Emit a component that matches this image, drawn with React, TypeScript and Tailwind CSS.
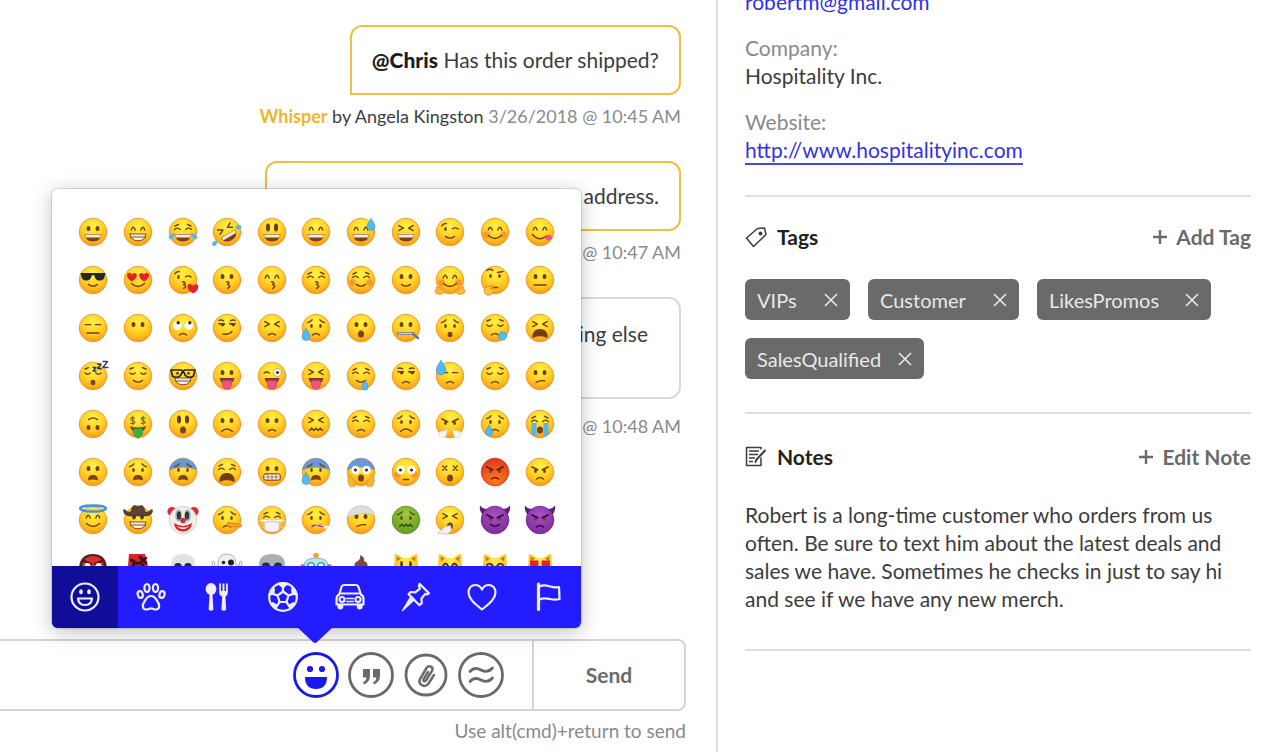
import React from 'react';
import { clsx } from 'clsx';

const INK = '#6f4110';

// Faces are drawn on a 32x32 box, centred on 16,16
const eyes: Record<string, React.ReactNode> = {
  dots: (
    <g fill={INK}>
      <ellipse cx="11.5" cy="12.5" rx="1.3" ry="1.9" />
      <ellipse cx="20.5" cy="12.5" rx="1.3" ry="1.9" />
    </g>
  ),
  tall: (
    <g fill={INK}>
      <ellipse cx="12" cy="11.5" rx="1.4" ry="3.4" />
      <ellipse cx="20" cy="11.5" rx="1.4" ry="3.4" />
    </g>
  ),
  happy: <path d="M9.2 14q2-5.4 4 0M18.8 14q2-5.4 4 0" />,
  closed: <path d="M8 13q2.6 2.4 5.2 0M18.8 13q2.6 2.4 5.2 0M8 9l3.5-1.4M24 9l-3.5-1.4" />,
  arched: <path d="M7.6 13.6q2.8-3 5.6 0M18.8 13.6q2.8-3 5.6 0M8 10l3.5-1.6M24 10l-3.5-1.6" />,
  flat: <path d="M8.3 12.6h5.4M18.3 12.6h5.4" />,
  squint: <path d="M8.8 9.6l4.6 2.6-4.6 2.4M23.2 9.6l-4.6 2.6 4.6 2.4" />,
  wink: (
    <>
      <ellipse cx="11.5" cy="13" rx="1.3" ry="1.9" fill={INK} stroke="none" />
      <path d="M7.8 9.8q2-2.6 4.6-2.2M18.5 12.8q2.6-2 5.6.2" />
    </>
  ),
  cross: <path d="M8.8 10l4 4.2M12.8 10l-4 4.2M19.2 10l4 4.2M23.2 10l-4 4.2" />,
  side: (
    <>
      <path d="M7.8 11.8h5.8M18.4 11.8h5.8M8 8.4q2.4-1 4.6.4M24 8.4q-2.4-1-4.6.4" />
      <path d="M10 12.4q1.8 2.6 3 0zM20.6 12.4q1.8 2.6 3 0z" fill={INK} />
    </>
  ),
  wide: (
    <g stroke="none">
      <circle cx="10.5" cy="14" r="4.2" fill="#fff" />
      <circle cx="21.5" cy="14" r="4.2" fill="#fff" />
      <circle cx="10.5" cy="14" r="1.6" fill="#4a2c10" />
      <circle cx="21.5" cy="14" r="1.6" fill="#4a2c10" />
    </g>
  ),
  roll: (
    <g stroke="none">
      <circle cx="10.2" cy="13.5" r="4.4" fill="#fff" />
      <circle cx="21.8" cy="13.5" r="4.4" fill="#fff" />
      <circle cx="11.2" cy="10.8" r="1.7" fill="#4a2c10" />
      <circle cx="22.8" cy="10.8" r="1.7" fill="#4a2c10" />
    </g>
  ),
  crazy: (
    <>
      <path d="M8 13q2.6-2.2 5.2 0" />
      <circle cx="21.5" cy="12.5" r="4" fill="#fff" stroke="#9b7a4a" strokeWidth="0.6" />
      <circle cx="21.5" cy="12.5" r="1.6" fill="#4a2c10" stroke="none" />
    </>
  ),
  shades: (
    <path
      d="M3.4 9h25.2l-.8 2.6c-.4 3.6-2 5-5 5-3.4 0-4.6-1.6-5.4-5l-1.4-.6-1.4.6c-.8 3.4-2 5-5.4 5-3 0-4.6-1.4-5-5z"
      fill="#252525"
      stroke="none"
    />
  ),
  hearts: (
    <path
      d="M9.8 17.6C3.6 13.8 4.2 9 7.2 8.8c1.6 0 2.4 1 2.8 2 .6-1 1.6-1.9 3-1.7 3 .5 2.6 5.3-3.2 8.5zM22.2 17.6c6.2-3.8 5.6-8.6 2.6-8.8-1.6 0-2.4 1-2.8 2-.6-1-1.6-1.9-3-1.7-3 .5-2.6 5.3 3.2 8.5z"
      fill="#e8202c"
      stroke="none"
    />
  ),
  money: (
    <path
      d="M12.8 10.2q-3.8-1.6-4 .8c0 2 4.2 1 4 3.2-.2 2-3 1.6-4.2.8M10.8 8.4v8.2M23.2 10.2q-3.800-1.600-4 .8c0 2 4.200 1 4 3.200-.2 2-3 1.600-4.200.8M21.200 8.400v8.200"
      stroke="#7c6a1e"
      strokeWidth="1.1"
    />
  ),
  nerd: (
    <>
      <path d="M4 10h10.5l1.5 1.4 1.5-1.4H28l-1.5 6q-4.5 3-8.2-.6l-1.3-3h-2l-1.300 3q-3.700 3.600-8.200.6z" fill="none" stroke="#2e2417" strokeWidth="1.7" />
      <circle cx="10.5" cy="13.2" r="1.5" fill={INK} stroke="none" />
      <circle cx="21.5" cy="13.2" r="1.5" fill={INK} stroke="none" />
    </>
  ),
  worried: (
    <>
      <ellipse cx="11.5" cy="14" rx="1.3" ry="1.9" fill={INK} stroke="none" />
      <ellipse cx="20.5" cy="14" rx="1.3" ry="1.9" fill={INK} stroke="none" />
      <path d="M7.5 10.6q3-.6 4.6-2.8M24.5 10.6q-3-.6-4.6-2.8" />
    </>
  ),
  raised: (
    <>
      <ellipse cx="11.5" cy="12" rx="1.3" ry="1.9" fill={INK} stroke="none" />
      <ellipse cx="20.5" cy="12" rx="1.3" ry="1.9" fill={INK} stroke="none" />
      <path d="M8 6.500q3-2.500 6 0M18.500 8.500l5.500-1" />
    </>
  ),
  mad: (
    <>
      <ellipse cx="11.5" cy="15" rx="1.4" ry="1.9" fill={INK} stroke="none" />
      <ellipse cx="20.5" cy="15" rx="1.4" ry="1.9" fill={INK} stroke="none" />
      <path d="M8 11l5.6 2.8M24 11l-5.6 2.8" strokeWidth="1.8" />
    </>
  ),
};

const mouths: Record<string, React.ReactNode> = {
  none: null,
  grin: (
    <>
      <path d="M7.5 18h17q-1 7.4-8.500 7.400T7.500 18z" fill="#7a4217" stroke="none" />
      <path d="M8 18.4h16l-.8 3H8.8z" fill="#f5ead6" stroke="none" />
    </>
  ),
  teeth: <path d="M8 18h16q-.6 6.8-8 6.8T8 18zM8.500 21h15" fill="#f4eee4" strokeWidth="0.9" />,
  smile: <path d="M9.5 19.4q6.5 6 13 0" />,
  slight: <path d="M11.5 20.4q4.5 3.4 9 0" />,
  tiny: <path d="M13.5 23.500h5" />,
  flat: <path d="M10 21h12" />,
  smirk: <path d="M12 22q6 1.2 9-2.6" />,
  frown: <path d="M10.5 23.4q5.5-5 11 0" />,
  smallFrown: <path d="M12.500 23q3.500-3 7 0" />,
  confused: <path d="M12 22.4q4-2.4 8.5-1.6" />,
  small: <ellipse cx="16" cy="22.5" rx="2.4" ry="2.8" fill="#7a4217" stroke="none" />,
  open: <ellipse cx="16" cy="22" rx="3" ry="3.6" fill="#7a4217" stroke="none" />,
  gape: <path d="M11 24.4q0-5.4 5-5.4t5 5.4q-5-2-10 0z" fill="#7a4217" stroke="none" />,
  wail: <path d="M9 25q.4-7.4 7-7.4T23 25q-7-3-14 0z" fill="#6f3d18" />,
  kiss: <path d="M15.5 17.8q4.600.6 1 2.800 4.600 1 .2 3.800" />,
  tongue: (
    <>
      <path d="M8.5 18h15q-1 6-7.5 6t-7.500-6z" fill="#7a4217" stroke="none" />
      <path d="M11.5 20.5h9V25q-.6 4-4.500 4t-4.500-4z" fill="#f0508c" stroke="#c9306c" strokeWidth="0.6" />
    </>
  ),
  yum: (
    <>
      <path d="M8.5 18.5q6.5 7.5 14 1.5" />
      <path d="M20.5 21.5l4.5-3q3.600 1 2.600 4-2 3-5 1.400z" fill="#ee4f86" stroke="none" />
    </>
  ),
  zip: (
    <>
      <path d="M8 21.5h15" stroke="#8b8b8b" strokeWidth="3" />
      <path d="M9 21.5h14" stroke="#e4e4e4" strokeWidth="1" strokeDasharray="1 1" />
      <path d="M23 22l5 4" stroke="#777" strokeWidth="2.6" />
    </>
  ),
  wave: <path d="M9.5 22.5l2.200-2.400 2.200 2.400 2.100-2.400 2.100 2.400 2.200-2.400 2.200 2.400" />,
  grimace: (
    <>
      <rect x="7.5" y="17.8" width="17" height="6.4" rx="2.6" fill="#f7f3ea" strokeWidth="1" />
      <path d="M8 21h16M12 18v6M16 18v6M20 18v6" strokeWidth="0.6" />
    </>
  ),
  cash: (
    <>
      <path d="M8 18q8 3 16 0-1 6-8 6t-8-6z" fill="#7a4217" stroke="none" />
      <path d="M11.5 20.5h9v6L16 30.500l-4.500-4z" fill="#3fae38" stroke="#2c8a2a" strokeWidth="0.6" />
    </>
  ),
};

const drop = (x: number, y: number, s = 1) => (
  <path
    transform={`translate(${x} ${y}) scale(${s})`}
    d="M0-5.5Q4 0 4 2.5a4 4 0 0 1-8 0Q-4 0 0-5.5z"
    fill="#54b9ee"
    stroke="#2b90cc"
    strokeWidth="0.5"
  />
);

const extras: Record<string, React.ReactNode> = {
  tears: (
    <g fill="#52b9ec">
      <path d="M8 17q-1 6-4.400 6.400Q.6 22.600 2.400 19.600 4.400 17.400 8 17zM24 17q1 6 4.400 6.400 3-.8 1.200-3.800Q27.600 17.400 24 17z" />
    </g>
  ),
  roflTears: (
    <g fill="#52b9ec">
      <path d="M6.500 24q-.6 6-3.500 6-3-.6-1.500-3.400Q3.500 24.600 6.500 24zM24.500 12q1-4 5.500-2.500 1.500 3-1.500 4-2.500 0-4-1.500z" />
    </g>
  ),
  dropTopRight: drop(26, 8),
  dropTopLeft: drop(7, 7, 1.2),
  dropLeft: drop(6, 22),
  tearLeft: drop(10, 22, 0.9),
  snot: <circle cx="23.5" cy="24" r="4.2" fill="#58bbee" stroke="#2b90cc" strokeWidth="0.6" />,
  drool: drop(20, 25, 0.8),
  heart: <path d="M26 29.500c-7.400-4-6.400-9.400-3-9.400 1.600 0 2.600 1 3 2.200.6-1.300 1.700-2.200 3.200-2 3.200.6 3.400 6-3.200 9.200z" fill="#e3202c" />,
  blush: (
    <g fill="#f2693a" opacity="0.5">
      <circle cx="7.5" cy="18.5" r="3.2" />
      <circle cx="24.5" cy="18.5" r="3.2" />
    </g>
  ),
  hands: (
    <path
      d="M2 29.500q-2.500-4 .5-4l-.5-3 3 2 2-2 .5 3.500 3-1q0 5-4 5.500zM30 29.500q2.500-4-.5-4l.5-3-3 2-2-2-.5 3.500-3-1q0 5 4 5.500z"
      fill="#f9b93a"
      stroke="#d98a1c"
      strokeWidth="0.6"
    />
  ),
  thinkHand: <path d="M6 29.500q-2.600-5 1-6.500l8-1.600q1 1.800-1 2.200l-3 .6q4 .2 3.400 3.400-.4 3.600-5.400 3.600z" fill="#fbc23c" stroke="#d98a1c" strokeWidth="0.8" />,
  zzz: <path d="M16 7.500h3l-3 3.500h3M20.500 4H24l-3.500 4.500H24M26 1.500h4.500l-4.500 6h5" stroke="#28368f" strokeWidth="1.3" />,
  steam: (
    <g fill="#f4f4f8" stroke="#cfcfd8" strokeWidth="0.5">
      <path d="M13 20.500q-1 3-5 2.500-4 1-3.500 4.500 2 3 5 2 4-1 3.500-9zM19 20.500q1 3 5 2.500 4 1 3.500 4.500-2 3-5 2-4-1-3.500-9z" />
    </g>
  ),
  streams: <path d="M7.500 15h5v13.500q-3 0-5-2.500zM19.500 15h5v11q-2 2.500-5 2.500z" fill="#58b6ea" />,
  coldTop: <path d="M2 14a14.200 14.200 0 0 1 28 0q-14-5-28 0z" fill="#5b8fe6" opacity="0.9" />,
  screamHands: <path d="M5 30.500q-4-6-1-11 3 0 3.500 4l3 2-1 5zM27 30.500q4-6 1-11-3 0-3.500 4l-3 2 1 5z" fill="#f9b331" stroke="#d98a1c" strokeWidth="0.6" />,
  halo: <ellipse cx="16" cy="4.5" rx="12.8" ry="3" stroke="#4a8fe0" strokeWidth="2.4" />,
  hat: <path d="M1.500 6q1-1.500 3.500 1.500Q8 8.500 9 7.500 10 1 13 1.500q3 1.400 6 0 3-.5 4 6 1 1 4 0 2.500-3 3.500-1.500.5 5-6 6h-17q-6.500-1-6-6z" fill="#5b4034" stroke="#3f2c24" strokeWidth="0.5" />,
  nose: <path d="M17 18.500l13 2q1.500 1.500-.5 2.500L17 22.500z" fill="#f6a623" stroke="#c97a1a" strokeWidth="0.8" />,
  mask: <path d="M2 16l7 2.500q7-3 14 0l7-2.500M2.500 22L9 24M29.500 22L23 24M9 18.500q7-2.500 14 0V26q-7 4-14 0z" fill="#f4f4f6" stroke="#cdcdd4" strokeWidth="0.9" />,
  thermometer: (
    <>
      <path d="M17 21.500l11 2" stroke="#efefef" strokeWidth="2.8" />
      <path d="M17 21.500l6 1.200" stroke="#dd2c44" strokeWidth="1.4" />
    </>
  ),
  bandage: <path d="M2 13.500Q5 2 16 1.700T30 12Q22 6 2 13.500z" fill="#dedee0" stroke="#b8b8bc" strokeWidth="0.6" />,
  tissue: <path d="M3.500 29l8-6.500 5-1 1 5-4 3.500z" fill="#f2f2f4" stroke="#bdbdc4" strokeWidth="0.7" />,
};

type Face = {
  name: string;
  eyes: string;
  mouth: string;
  extra?: string;
  under?: string;
  skin?: string;
  rotate?: number;
};

const f = (name: string, e: string, m: string, extra?: string, more: Partial<Face> = {}): Face => ({
  name,
  eyes: e,
  mouth: m,
  extra,
  ...more,
});

const faces: Face[] = [
  f('grinning', 'dots', 'grin'),
  f('beaming', 'happy', 'teeth'),
  f('tears of joy', 'arched', 'grin', 'tears'),
  f('rolling on the floor', 'squint', 'grin', 'roflTears', { rotate: -30 }),
  f('big eyes', 'tall', 'grin'),
  f('smiling eyes', 'happy', 'grin'),
  f('sweat smile', 'happy', 'grin', 'dropTopRight'),
  f('laughing', 'squint', 'grin'),
  f('winking', 'wink', 'slight'),
  f('blushing', 'happy', 'smile', undefined, { under: 'blush' }),
  f('yum', 'happy', 'yum'),

  f('sunglasses', 'shades', 'slight'),
  f('heart eyes', 'hearts', 'smile'),
  f('blowing a kiss', 'wink', 'kiss', 'heart'),
  f('kissing', 'dots', 'kiss'),
  f('kissing happily', 'happy', 'kiss'),
  f('kissing, eyes closed', 'arched', 'kiss'),
  f('relaxed', 'arched', 'slight', undefined, { under: 'blush' }),
  f('slight smile', 'dots', 'slight'),
  f('hugging', 'happy', 'smile', 'hands', { under: 'blush' }),
  f('thinking', 'raised', 'tiny', 'thinkHand'),
  f('neutral', 'dots', 'flat'),

  f('expressionless', 'flat', 'flat'),
  f('no mouth', 'dots', 'none'),
  f('rolling eyes', 'roll', 'smallFrown'),
  f('smirking', 'side', 'smirk'),
  f('persevering', 'squint', 'smallFrown'),
  f('relieved and sad', 'worried', 'smallFrown', 'dropLeft'),
  f('open mouth', 'dots', 'open'),
  f('zipped', 'dots', 'zip'),
  f('hushed', 'worried', 'small'),
  f('sleepy', 'closed', 'smallFrown', 'snot'),
  f('tired', 'squint', 'wail'),

  f('sleeping', 'closed', 'small', 'zzz'),
  f('relieved', 'closed', 'slight'),
  f('nerd', 'nerd', 'teeth'),
  f('tongue out', 'dots', 'tongue'),
  f('tongue and wink', 'crazy', 'tongue'),
  f('tongue and squint', 'squint', 'tongue'),
  f('drooling', 'arched', 'slight', 'drool'),
  f('unamused', 'side', 'smallFrown'),
  f('downcast', 'flat', 'smallFrown', 'dropTopLeft'),
  f('pensive', 'closed', 'smallFrown'),
  f('confused', 'dots', 'confused'),

  f('upside down', 'dots', 'slight', undefined, { rotate: 180 }),
  f('money mouth', 'money', 'cash'),
  f('astonished', 'tall', 'open'),
  f('frowning', 'dots', 'frown'),
  f('slightly frowning', 'dots', 'smallFrown'),
  f('confounded', 'squint', 'wave'),
  f('disappointed', 'arched', 'smallFrown'),
  f('worried', 'worried', 'frown'),
  f('triumph', 'mad', 'none', 'steam'),
  f('crying', 'worried', 'smallFrown', 'tearLeft'),
  f('sobbing', 'arched', 'open', 'streams'),

  f('frowning, open', 'dots', 'gape'),
  f('anguished', 'worried', 'gape'),
  f('fearful', 'worried', 'gape', undefined, { under: 'coldTop' }),
  f('weary', 'arched', 'wail'),
  f('grimacing', 'dots', 'grimace'),
  f('cold sweat', 'worried', 'gape', 'dropLeft', { under: 'coldTop' }),
  f('screaming', 'wide', 'open', 'screamHands', { under: 'coldTop' }),
  f('flushed', 'wide', 'tiny', undefined, { under: 'blush' }),
  f('dizzy', 'cross', 'open'),
  f('enraged', 'mad', 'smallFrown', undefined, { skin: 'red' }),
  f('angry', 'mad', 'smallFrown'),

  f('angel', 'happy', 'smile', 'halo'),
  f('cowboy', 'tall', 'teeth', 'hat'),
  f('clown', 'tall', 'none', undefined, { skin: 'clown' }),
  f('lying', 'worried', 'smallFrown', 'nose'),
  f('masked', 'arched', 'none', 'mask'),
  f('fever', 'worried', 'confused', 'thermometer'),
  f('bandaged', 'dots', 'confused', 'bandage'),
  f('nauseated', 'worried', 'wave', undefined, { skin: 'green' }),
  f('sneezing', 'squint', 'open', 'tissue'),
  f('smiling devil', 'mad', 'slight', undefined, { skin: 'purple' }),
  f('angry devil', 'mad', 'smallFrown', undefined, { skin: 'purple' }),
];

const skins: Record<string, { fill: string; edge: string; ink: string }> = {
  yellow: { fill: 'url(#skin-yellow)', edge: '#eb962e', ink: INK },
  red: { fill: 'url(#skin-red)', edge: '#d9381c', ink: '#5a1a0c' },
  green: { fill: 'url(#skin-green)', edge: '#5b9424', ink: '#33560f' },
  purple: { fill: 'url(#skin-purple)', edge: '#74288f', ink: '#2f0b40' },
  clown: { fill: '#f3ede6', edge: '#d8cfc4', ink: '#3a2a22' },
};

const FaceIcon: React.FC<{ face: Face }> = ({ face }) => {
  const skin = face.skin || 'yellow';
  const { fill, edge, ink } = skins[skin];
  return (
    <svg viewBox="0 0 32 32" className="h-8 w-8" fill="none" strokeLinecap="round" strokeLinejoin="round" aria-hidden="true">
      {skin === 'purple' && <path d="M5 12Q0 8 1 1.500q3 4 9 3.500zM27 12q5-4 4-10.500-3 4-9 3.500z" fill="#5c2173" />}
      {skin === 'clown' && (
        <g fill="#dd2b39">
          <circle cx="5" cy="7.5" r="4.6" />
          <circle cx="27" cy="7.5" r="4.6" />
        </g>
      )}
      <circle cx="16" cy="16" r="13.8" fill={fill} stroke={edge} strokeWidth="0.9" />
      {skin === 'clown' && (
        <>
          <ellipse cx="11.5" cy="11.5" rx="3.2" ry="6" fill="#7db7e2" />
          <ellipse cx="20.5" cy="11.5" rx="3.2" ry="6" fill="#7db7e2" />
          <path d="M7 19q9 6 18 0-1 8.500-9 8.500T7 19z" fill="#d9222f" />
          <path d="M10 22q6 3 12 0-2 3-6 3t-6-3z" fill="#fff" />
          <circle cx="16" cy="16.5" r="2.8" fill="#e22837" />
        </>
      )}
      {face.under && extras[face.under]}
      <g stroke={ink} strokeWidth="1.4" transform={`rotate(${face.rotate || 0} 16 16)`}>
        {eyes[face.eyes]}
        {mouths[face.mouth]}
      </g>
      {face.extra && extras[face.extra]}
    </svg>
  );
};

const cat = (e: React.ReactNode) => (
  <>
    <path d="M4 15L5 2q5 1 8 4h6q3-3 8-4l1 13q0 14-12 14T4 15z" fill="url(#skin-yellow)" />
    <path d="M6.500 4.500l.5 5 4-3zM25.500 4.500l-.5 5-4-3z" fill="#b9803a" />
    <g stroke="#4a3210" strokeWidth="1.8">{e}</g>
  </>
);

const creatures: { name: string; art: React.ReactNode }[] = [
  {
    name: 'ogre',
    art: (
      <>
        <path d="M2 16Q3 2 16 2t14 14q0 13-14 13T2 16z" fill="#4b2320" />
        <path d="M5 17Q5 4 16 4t11 13q-2 11-11 11T5 17z" fill="#dd2f25" />
        <path d="M7 9l7 3M25 9l-7 3" stroke="#4b1512" strokeWidth="2" />
        <circle cx="10.5" cy="14" r="3" fill="#fff" />
        <circle cx="21.5" cy="14" r="3" fill="#fff" />
      </>
    ),
  },
  {
    name: 'goblin',
    art: (
      <>
        <path d="M7 2h16l3 12-3 15H9L6 14z" fill="#d3232b" />
        <path d="M9 8l7 4 8-6M18 5l6 6" stroke="#3c1113" strokeWidth="2.6" />
        <circle cx="11.5" cy="13" r="2" fill="#3c1113" />
        <circle cx="20.5" cy="13" r="2" fill="#3c1113" />
      </>
    ),
  },
  {
    name: 'skull',
    art: (
      <>
        <path d="M4 13Q4 2 16 2t12 11q0 8-4 9v6H8v-6q-4-1-4-9z" fill="#dfe2e4" />
        <ellipse cx="11" cy="14" rx="3.6" ry="3" fill="#26282a" />
        <ellipse cx="21" cy="14" rx="3.6" ry="3" fill="#26282a" />
      </>
    ),
  },
  {
    name: 'ghost',
    art: (
      <>
        <path d="M7 29V12Q7 2 16 2t9 10l3 2 1-5 2 1-1 8-5 3v8zM7 21l-5-3-1-8 2-1 1 5 3 2z" fill="#f0f0f1" stroke="#b5b5b8" />
        <circle cx="12.5" cy="10.5" r="1.8" fill="#222" />
        <circle cx="20" cy="10.5" r="3" fill="#222" />
      </>
    ),
  },
  {
    name: 'alien',
    art: (
      <>
        <path d="M3 13Q3 2 16 2t13 11q0 9-13 16Q3 22 3 13z" fill="#a9b1b5" />
        <ellipse cx="10" cy="14" rx="4" ry="3.4" fill="#2a3034" />
        <ellipse cx="22" cy="14" rx="4" ry="3.4" fill="#2a3034" />
      </>
    ),
  },
  {
    name: 'robot',
    art: (
      <>
        <circle cx="16" cy="3.5" r="2.8" fill="#f0a63a" />
        <path d="M4 14q0-8 12-8t12 8v13H4z" fill="#bfe3ee" stroke="#7fb9cb" />
        <circle cx="2.5" cy="14" r="2" fill="#e2615f" />
        <circle cx="29.5" cy="14" r="2" fill="#e2615f" />
        <circle cx="11" cy="14" r="3.2" fill="#fff" stroke="#39a5c9" strokeWidth="1.6" />
        <circle cx="21" cy="14" r="3.2" fill="#fff" stroke="#39a5c9" strokeWidth="1.6" />
      </>
    ),
  },
  {
    name: 'poop',
    art: <path d="M15 3q5 2 4 6 5 2 3 6 6 2 4 7 3 7-4 7H10q-7 0-4-7-2-5 4-7-2-4 3-6 3-2 2-6z" fill="#7b4a38" />,
  },
  { name: 'cat', art: cat(<path d="M11.500 10.500V14M20.500 10.500V14" strokeWidth="2.4" />) },
  { name: 'happy cat', art: cat(<path d="M9 14q2.500-5 5 0M18 14q2.500-5 5 0" />) },
  { name: 'joyful cat', art: cat(<path d="M8 13q3-3 6 1M24 13q-3-3-6 1" />) },
  { name: 'heart-eyed cat', art: cat(<path d="M7 9.500h6.500v5H7zM18.500 9.500H25v5h-6.500z" fill="#e3202c" stroke="#e3202c" />) },
];

const SkinGradients = () => (
  <svg className="absolute h-0 w-0" aria-hidden="true">
    <defs>
      <radialGradient id="skin-yellow" cx="0.5" cy="0.28" r="0.74">
        <stop offset="0" stopColor="#fff04a" />
        <stop offset="0.5" stopColor="#ffd426" />
        <stop offset="0.8" stopColor="#fcb21c" />
        <stop offset="1" stopColor="#f0921e" />
      </radialGradient>
      <radialGradient id="skin-red" cx="0.5" cy="0.8" r="0.9">
        <stop offset="0" stopColor="#ff7a1e" />
        <stop offset="1" stopColor="#dc2f1c" />
      </radialGradient>
      <radialGradient id="skin-green" cx="0.5" cy="0.3" r="0.75">
        <stop offset="0" stopColor="#a3c93a" />
        <stop offset="1" stopColor="#5d9a22" />
      </radialGradient>
      <radialGradient id="skin-purple" cx="0.5" cy="0.3" r="0.75">
        <stop offset="0" stopColor="#a94fc4" />
        <stop offset="1" stopColor="#7a2a9c" />
      </radialGradient>
    </defs>
  </svg>
);

const categories: { name: string; art: React.ReactNode }[] = [
  {
    name: 'Smileys',
    art: (
      <>
        <circle cx="16" cy="16" r="13.5" />
        <path d="M9 17.500h14q-.5 6.500-7 6.500t-7-6.500z" />
        <ellipse cx="12" cy="10.8" rx="1.9" ry="2.5" fill="currentColor" stroke="none" />
        <ellipse cx="20" cy="10.8" rx="1.9" ry="2.5" fill="currentColor" stroke="none" />
      </>
    ),
  },
  {
    name: 'Animals',
    art: (
      <>
        <ellipse cx="12" cy="7" rx="2.6" ry="4" />
        <ellipse cx="20.5" cy="7" rx="2.6" ry="4" />
        <ellipse cx="5.2" cy="13.5" rx="2.5" ry="3.5" transform="rotate(-14 5.2 13.5)" />
        <ellipse cx="27" cy="13.5" rx="2.5" ry="3.5" transform="rotate(14 27 13.5)" />
        <path d="M16 15c4 0 5 3 6.500 5.500 2.500 3 2.300 8-1.500 8-2 0-3-1.200-5-1.200s-3 1.200-5 1.200c-3.800 0-4-5-1.500-8C11 18 12 15 16 15z" />
      </>
    ),
  },
  {
    name: 'Food',
    art: (
      <g fill="currentColor" stroke="none">
        <ellipse cx="10" cy="8" rx="5.4" ry="6" />
        <path d="M8.600 12h2.800l1 16.500q-2.400 2.400-4.800 0z" />
        <path d="M18.200 2.500h1.800v7.500h1.500V2.500h2V10H25V2.500h1.800v9q0 3-2.300 4l.7 13q-2.400 2.400-4.800 0l.8-13q-3-1-3-4z" />
      </g>
    ),
  },
  {
    name: 'Activities',
    art: (
      <>
        <circle cx="16" cy="16" r="13.8" />
        <path d="M16 10.500l5.500 4-2.100 6.500h-6.800l-2.100-6.500z" />
        <path d="M16 10.500V6M21.500 14.500l4.500-1.600M19.400 21l2.800 4M12.600 21l-2.800 4M10.500 14.500L6 12.900" />
        <path
          d="M12 2.800l4 3.400 4-3.400q-4-1.300-8 0zM29.600 13.500l-3.800-.7-.7-4.800q3.500 2 4.500 5.500zM23.500 27.300l-1.400-2.600 4.300-2.500q-.4 3-2.900 5.100zM8.500 27.300l1.400-2.600-4.300-2.500q.4 3 2.900 5.100zM2.400 13.500l3.800-.7.7-4.800q-3.500 2-4.500 5.500z"
          fill="currentColor"
        />
      </>
    ),
  },
  {
    name: 'Travel',
    art: (
      <>
        <path d="M5 14l2.500-8Q8 4 10.500 4h11Q24 4 24.500 6l2.500 8M7.500 12.500h17M4.500 14Q2.500 15 2.500 18v5.500h27V18q0-3-2-4" />
        <circle cx="8" cy="18.500" r="2.500" />
        <circle cx="24" cy="18.500" r="2.500" />
        <path d="M12.500 17.500h7M12.500 20.500h7" strokeWidth="1.4" />
        <path d="M4.500 23.500v3q1.800 2 3.600 0v-3M23.900 23.500v3q1.800 2 3.600 0v-3" fill="currentColor" />
      </>
    ),
  },
  {
    name: 'Objects',
    art: (
      <>
        <path d="M19.500 2.800L29 12.300l-2.200 1.200-1.600-.6-3.700 4.600.3 4.700-2.300 2L8.600 13.300l2-2.300 4.700.3 4.600-3.700-.9-2.500z" />
        <path d="M14.500 18.500L2.500 29.500 11 15.300z" fill="currentColor" strokeWidth="1.4" />
      </>
    ),
  },
  {
    name: 'Symbols',
    art: <path d="M16 28.500C7 21.500 2.500 17 2.500 11.200 2.500 6.800 5.600 4 9.200 4c3 0 5.400 1.600 6.800 4.600C17.400 5.600 19.800 4 22.800 4c3.600 0 6.700 2.800 6.700 7.200 0 5.800-4.500 10.300-13.500 17.300z" />,
  },
  {
    name: 'Flags',
    art: (
      <>
        <path d="M6.500 3v25.500" strokeWidth="3.2" />
        <path d="M7.500 5.500c7-4 11 2.500 19.500.5l.5 12c-8 3-12-3.500-20 .5" />
      </>
    ),
  },
];

const EmojiPicker = () => (
  <div
    role="dialog"
    aria-label="Emoji"
    className="absolute right-[105px] bottom-full z-10 mb-[11px] w-[529px] rounded-md bg-white shadow-[0_0_0_1px_rgba(0,0,0,0.12),0_4px_20px_rgba(0,0,0,0.25)]"
  >
    <div className="grid h-[377px] auto-rows-[48px] grid-cols-11 overflow-hidden px-[19px] pt-[19px]">
      {faces.map((face) => (
        <button key={face.name} type="button" aria-label={face.name} className="flex items-center justify-center">
          <FaceIcon face={face} />
        </button>
      ))}
      {creatures.map((item) => (
        <button key={item.name} type="button" aria-label={item.name} className="flex items-center justify-center">
          <svg viewBox="0 0 32 32" className="h-8 w-8" fill="none" strokeLinecap="round" aria-hidden="true">
            {item.art}
          </svg>
        </button>
      ))}
    </div>
    <div className="grid h-[62px] grid-cols-8 overflow-hidden rounded-b-md bg-[#231cff] text-[#eeeeff]">
      {categories.map((item, index) => (
        <button
          key={item.name}
          type="button"
          aria-label={item.name}
          className={clsx('flex items-center justify-center', index === 0 && 'bg-[#100e98]')}
        >
          <svg viewBox="0 0 32 32" className="h-8 w-8" fill="none" stroke="currentColor" strokeWidth="2.2" strokeLinecap="round" strokeLinejoin="round" aria-hidden="true">
            {item.art}
          </svg>
        </button>
      ))}
    </div>
    <svg viewBox="0 0 36 17" className="absolute top-full left-[245px] -mt-px h-[17px] w-9" aria-hidden="true">
      <path d="M0 0h36L20 15q-2 2-4 0z" fill="#231cff" />
    </svg>
  </div>
);

const tools = [
  {
    name: 'Emoji',
    color: 'text-[#1a1aee]',
    art: (
      <>
        <circle cx="23" cy="23" r="21.5" strokeWidth="2.8" />
        <circle cx="17" cy="17" r="3.1" fill="currentColor" stroke="none" />
        <circle cx="29" cy="17" r="3.1" fill="currentColor" stroke="none" />
        <path d="M12 25h22q0 12-11 12T12 25z" fill="currentColor" stroke="none" />
      </>
    ),
  },
  {
    name: 'Saved replies',
    color: 'text-[#6a6a6a]',
    art: (
      <>
        <circle cx="23" cy="23" r="21.5" strokeWidth="2.8" />
        <path d="M15 17h7v7q0 6-6 8.500l-1-2.200q3.200-1.600 3.400-4.800H15zM25 17h7v7q0 6-6 8.500l-1-2.200q3.200-1.600 3.400-4.800H25z" fill="currentColor" stroke="none" />
      </>
    ),
  },
  {
    name: 'Attach file',
    color: 'text-[#6a6a6a]',
    art: (
      <>
        <circle cx="23" cy="23" r="20" strokeWidth="2.8" />
        <path d="M31 23l-5.500 8.500c-3.500 5-11 1-8.500-4.500l6.500-11c2.500-3.600 7.500-1 5.500 3l-6 9.500c-1.200 1.600-3.200.4-2.500-1.300l4.500-7.200" strokeWidth="2.5" />
      </>
    ),
  },
  {
    name: 'Signature',
    color: 'text-[#6a6a6a]',
    art: (
      <>
        <circle cx="23" cy="23" r="21.5" strokeWidth="2.8" />
        <path d="M12 19.500q4.500-5 11-1.500t11.500-2M12 29.500q4.500-5 11-1.500t11.500-2" strokeWidth="2.8" />
      </>
    ),
  },
];

const Composer = () => (
  <div className="relative -ml-4">
    <EmojiPicker />
    <form className="flex h-[72px] rounded-lg border-2 border-[#d4d4d4]" onSubmit={(e) => e.preventDefault()}>
      <input aria-label="Message" className="min-w-0 flex-1 bg-transparent px-6 text-[21px] outline-none" />
      <div className="flex items-center gap-[9px] border-r-2 border-[#d4d4d4] pr-7">
        {tools.map((tool) => (
          <button key={tool.name} type="button" aria-label={tool.name} className={tool.color}>
            <svg viewBox="0 0 46 46" className="block h-[46px] w-[46px]" fill="none" stroke="currentColor" strokeLinecap="round" aria-hidden="true">
              {tool.art}
            </svg>
          </button>
        ))}
      </div>
      <button type="submit" className="w-[150px] text-[21px] font-bold text-[#6a6a6a]">
        Send
      </button>
    </form>
    <p className="mt-2 text-right text-[19px] leading-6 text-[#8a8a8a]">Use alt(cmd)+return to send</p>
  </div>
);

const Messages = () => (
  <div className="flex flex-col items-end pt-[25px] pr-[5px] text-[21px] leading-7 text-[#3c3c3c]">
    <div className="rounded-xl rounded-bl-none border-2 border-[#edbf45] px-5 py-[19px]">
      <strong className="font-black text-[#1c1c1c]">@Chris</strong> Has this order shipped?
    </div>
    <p className="mt-[9px] text-lg leading-6 text-[#8a8a8a]">
      <span className="font-bold text-[#efb526]">Whisper</span> <span className="text-[#3c3c3c]">by Angela Kingston</span> 3/26/2018 @ 10:45 AM
    </p>
    <div className="mt-[33px] w-[416px] rounded-xl rounded-bl-none border-2 border-[#edbf45] px-5 py-[19px] text-right">address.</div>
    <p className="mt-[9px] text-lg leading-6 text-[#8a8a8a]">@ 10:47 AM</p>
    <div className="mt-[33px] h-[102px] w-[416px] rounded-xl border-2 border-[#d9d9d9] px-[31px] py-[21px] text-right">anything else</div>
    <p className="mt-[15px] text-lg leading-6 text-[#8a8a8a]">@ 10:48 AM</p>
  </div>
);

const tags = [
  { label: 'VIPs', width: 'w-[105px]' },
  { label: 'Customer', width: 'w-[151px]' },
  { label: 'LikesPromos', width: 'w-[174px]' },
  { label: 'SalesQualified', width: 'w-[179px]' },
];

const SectionHeader: React.FC<{ icon: React.ReactNode; title: string; action: string }> = ({ icon, title, action }) => (
  <div className="flex items-center text-[21px] leading-7 font-bold">
    <svg viewBox="0 0 22 22" className="h-[22px] w-[22px]" fill="none" stroke="#3c3c3c" strokeWidth="1.5" strokeLinecap="round" strokeLinejoin="round" aria-hidden="true">
      {icon}
    </svg>
    <h2 className="ml-[10px] text-[#222]">{title}</h2>
    <button type="button" className="ml-auto flex items-center gap-2 text-[#6a6a6a]">
      <svg viewBox="0 0 16 16" className="h-4 w-4" stroke="currentColor" strokeWidth="2.4" aria-hidden="true">
        <path d="M8 1v14M1 8h14" />
      </svg>
      {action}
    </button>
  </div>
);

const Details = () => (
  <aside className="w-[552px] shrink-0 overflow-hidden border-l-2 border-[#dedede] pr-[17px] pl-[27px] text-[21px] leading-7 text-[#3c3c3c]">
    <dl className="-mt-3 flex flex-col gap-[18px]">
      <div>
        <dd>
          <a href="mailto:robertm@gmail.com" className="text-[#3232e0]">robertm@gmail.com</a>
        </dd>
      </div>
      <div>
        <dt className="text-[#8a8a8a]">Company:</dt>
        <dd>Hospitality Inc.</dd>
      </div>
      <div>
        <dt className="text-[#8a8a8a]">Website:</dt>
        <dd>
          <a href="http://www.hospitalityinc.com" className="inline-block border-b-2 border-[#4848e4] leading-[26px] text-[#3232e0]">
            http://www.hospitalityinc.com
          </a>
        </dd>
      </div>
    </dl>

    <section className="mt-[30px] border-t-2 border-[#dedede] pt-[26px]">
      <SectionHeader
        title="Tags"
        action="Add Tag"
        icon={
          <>
            <path d="M12.500 2.500l7-.5 1.500 6.500L8.500 20.500 1.500 12z" />
            <circle cx="15.500" cy="7.500" r="1.2" fill="#3c3c3c" />
          </>
        }
      />
      <ul className="mt-7 flex flex-wrap gap-[18px]">
        {tags.map((tag) => (
          <li key={tag.label} className={clsx('flex h-[41px] items-center justify-between rounded-md bg-[#6a6a6a] px-3 text-xl text-[#e8e8e8]', tag.width)}>
            {tag.label}
            <button type="button" aria-label={`Remove ${tag.label}`}>
              <svg viewBox="0 0 14 14" className="block h-[14px] w-[14px]" stroke="currentColor" strokeWidth="1.6" aria-hidden="true">
                <path d="M1 1l12 12M13 1L1 13" />
              </svg>
            </button>
          </li>
        ))}
      </ul>
    </section>

    <section className="mt-[33px] border-y-2 border-[#dedede] pt-[29px] pb-9">
      <SectionHeader
        title="Notes"
        action="Edit Note"
        icon={
          <>
            <path d="M16 3V1.500H1.500v18H16V12" />
            <path d="M4.500 5h9M4.500 8.500h8M4.500 12h5M4.500 15.500h3" strokeWidth="1.4" />
            <path d="M20 4.500l-8.500 9-1 2.500" strokeWidth="2" />
          </>
        }
      />
      <p className="mt-[30px] pr-6">
        Robert is a long-time customer who orders from us often. Be sure to text him about the latest deals and sales we have. Sometimes he checks in just to say hi and see if we have any new merch.
      </p>
    </section>
  </aside>
);

const App: React.FC = () => {
  return (
    <div className="flex h-screen overflow-hidden bg-white font-['Lato',sans-serif]">
      <SkinGradients />
      <main className="flex min-w-0 flex-1 flex-col justify-between overflow-hidden pr-[30px] pb-[9px]">
        <Messages />
        <Composer />
      </main>
      <Details />
    </div>
  );
};

export default App;
